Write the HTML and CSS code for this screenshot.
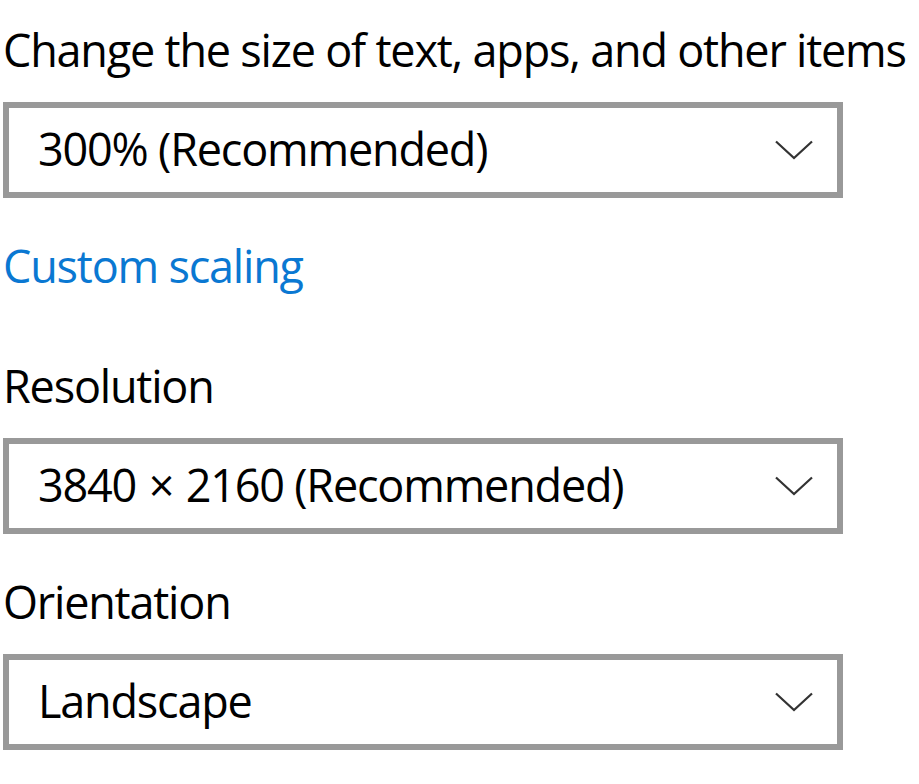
FILE: index.html
```html
<!DOCTYPE html>
<html lang="en">
<head>
<meta charset="utf-8">
<title>Display settings</title>
<link rel="stylesheet" href="styles.css">
</head>
<body>
<main class="page">
  <section class="group">
    <div class="label">Change the size of text, apps, and other items</div>
    <div class="select">
      <span class="value">300% (Recommended)</span>
      <svg class="chev" width="38" height="20" viewBox="0 0 38 20"><polyline points="1,1.5 19,18 37,1.5" fill="none" stroke="#333" stroke-width="2.2"/></svg>
    </div>
    <a class="link" href="#">Custom scaling</a>
  </section>
  <section class="group">
    <div class="label">Resolution</div>
    <div class="select">
      <span class="value">3840 <span class="times">×</span> 2160 (Recommended)</span>
      <svg class="chev" width="38" height="20" viewBox="0 0 38 20"><polyline points="1,1.5 19,18 37,1.5" fill="none" stroke="#333" stroke-width="2.2"/></svg>
    </div>
  </section>
  <section class="group">
    <div class="label">Orientation</div>
    <div class="select">
      <span class="value">Landscape</span>
      <svg class="chev" width="38" height="20" viewBox="0 0 38 20"><polyline points="1,1.5 19,18 37,1.5" fill="none" stroke="#333" stroke-width="2.2"/></svg>
    </div>
  </section>
</main>
</body>
</html>
```
FILE: styles.css
```css
html, body {
  margin: 0;
  padding: 0;
  background: #ffffff;
}
body {
  font-family: "Open Sans", "Noto Sans", sans-serif;
  font-size: 45px;
  color: #000000;
}
.page {
  padding: 20px 0 0 3px;
  width: 840px;
}
.group {
  display: flex;
  flex-direction: column;
  align-items: flex-start;
  margin-bottom: 38px;
}
.label {
  line-height: 60px;
  height: 60px;
  margin-bottom: 22px;
  white-space: nowrap;
  letter-spacing: -1.2px;
}
.select {
  box-sizing: border-box;
  width: 840px;
  height: 96px;
  border: 6px solid #999999;
  background: #ffffff;
  display: flex;
  align-items: center;
  justify-content: space-between;
  padding: 0 24px 2px 29px;
}
.value {
  line-height: 82px;
  letter-spacing: -1.2px;
  white-space: nowrap;
}
.times {
  margin: 0 2px;
}
.chev {
  display: block;
  margin-top: 2px;
}
.link {
  display: block;
  margin-top: 38px;
  margin-bottom: 22px;
  line-height: 60px;
  color: #0a78d2;
  text-decoration: none;
  letter-spacing: -1.2px;
}
```
